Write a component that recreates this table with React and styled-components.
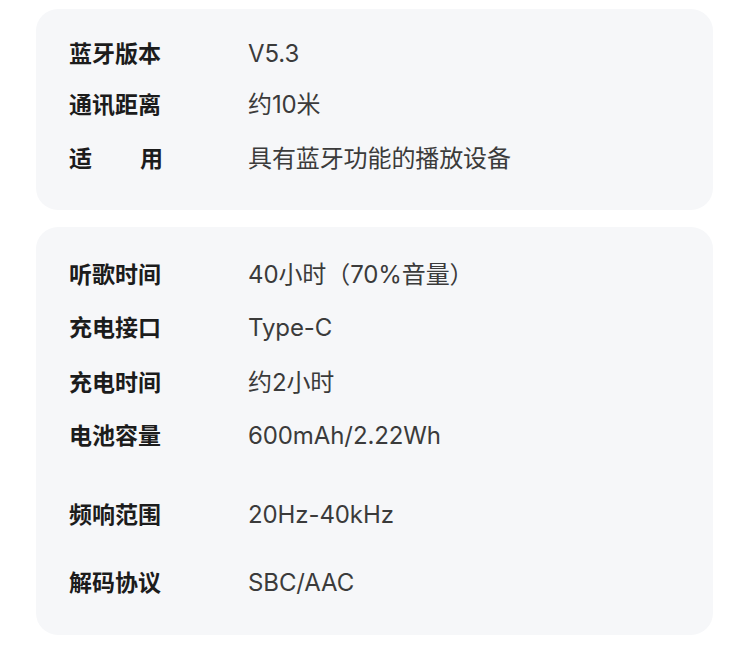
import React from 'react'
import styled, { createGlobalStyle } from 'styled-components'

const GlobalStyle = createGlobalStyle`
  body {
    margin: 0;
    background: #ffffff;
    font-family: Inter, "Noto Sans CJK SC", sans-serif;
  }
`

const Page = styled.div`
  padding: 9px 0 0 36px;
  display: flex;
  flex-direction: column;
  gap: 17px;
`

const Card = styled.div`
  width: 677px;
  box-sizing: border-box;
  background: #f6f7f9;
  border-radius: 22px;
  padding: ${p => p.$top}px 33px ${p => p.$bottom}px;
`

const Row = styled.div`
  display: flex;
  align-items: baseline;
  height: 30px;
  line-height: 30px;
  margin-top: ${p => p.$gap || 0}px;
`

const Label = styled.div`
  width: 94px;
  margin-right: 85px;
  font-family: "Noto Sans CJK SC", sans-serif;
  font-weight: 700;
  font-size: 23px;
  color: #1c1c1c;
  display: flex;
  justify-content: space-between;
  white-space: nowrap;
`

const Value = styled.div`
  font-size: 24px;
  letter-spacing: -0.1px;
  color: #3b3b3b;
  white-space: nowrap;
`

const first = [
  { label: '蓝牙版本', value: 'V5.3' },
  { label: '通讯距离', value: '约10米', gap: 21 },
  { label: ['适', '用'], value: '具有蓝牙功能的播放设备', gap: 24 },
]

const second = [
  { label: '听歌时间', value: '40小时（70%音量）' },
  { label: '充电接口', value: 'Type-C', gap: 23 },
  { label: '充电时间', value: '约2小时', gap: 25 },
  { label: '电池容量', value: '600mAh/2.22Wh', gap: 23 },
  { label: '频响范围', value: '20Hz-40kHz', gap: 49 },
  { label: '解码协议', value: 'SBC/AAC', gap: 38 },
]

const SpecRow = ({ label, value, gap }) => (
  <Row $gap={gap}>
    <Label>
      {Array.isArray(label) ? label.map(c => <span key={c}>{c}</span>) : label}
    </Label>
    <Value>{value}</Value>
  </Row>
)

export default function App() {
  return (
    <>
      <GlobalStyle />
      <Page>
        <Card $top={28} $bottom={38}>
          {first.map((r, i) => <SpecRow key={i} {...r} />)}
        </Card>
        <Card $top={31} $bottom={39}>
          {second.map((r, i) => <SpecRow key={i} {...r} />)}
        </Card>
      </Page>
    </>
  )
}
